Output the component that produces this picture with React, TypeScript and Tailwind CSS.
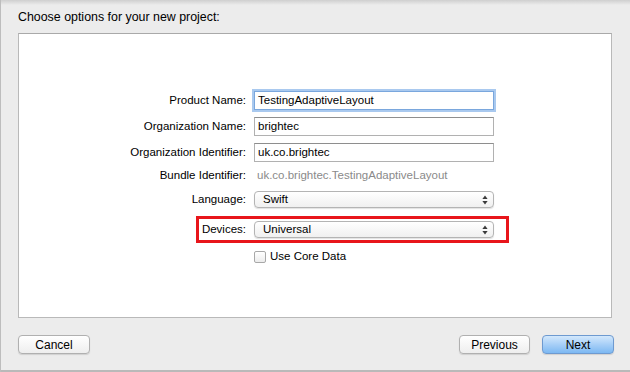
import React from "react";

const font = { fontFamily: '"Liberation Sans", Arial, sans-serif' };

function Arrows() {
  return (
    <svg width="6" height="10" viewBox="0 0 6 10" className="shrink-0">
      <path d="M3 0.5 L5.6 4 L0.4 4 Z" fill="#3a3a3a" />
      <path d="M3 9.5 L5.6 6 L0.4 6 Z" fill="#3a3a3a" />
    </svg>
  );
}

function TextField({ value, focus }: { value: string; focus?: boolean }) {
  return (
    <div
      className={
        "w-[240px] h-[19px] bg-white flex items-center pl-[3px] text-[11.5px] text-black border " +
        (focus
          ? "border-[#7aa7dd] shadow-[0_0_0_2px_#a9c9ef]"
          : "border-[#b1b1b1] border-t-[#8e8e8e]")
      }
    >
      {value}
    </div>
  );
}

function Popup({ value }: { value: string }) {
  return (
    <div className="w-[240px] h-[17px] rounded-[4px] border border-[#b4b4b4] bg-gradient-to-b from-white to-[#f0f0f0] shadow-[0_1px_1px_rgba(0,0,0,0.12)] flex items-center justify-between pl-[8px] pr-[5px] text-[11.5px] text-black">
      <span>{value}</span>
      <Arrows />
    </div>
  );
}

function Row({ label, children, className }: { label: string; children: React.ReactNode; className?: string }) {
  return (
    <div className={"flex items-center " + (className || "")}>
      <div className="w-[235px] text-right text-[11.5px] text-black pr-[8px] leading-none">{label}</div>
      {children}
    </div>
  );
}

function Button({ label, primary, w }: { label: string; primary?: boolean; w: string }) {
  return (
    <div
      className={
        w +
        " h-[19px] rounded-[4px] border flex items-center justify-center text-[12px] text-black shadow-[0_1px_1px_rgba(0,0,0,0.12)] " +
        (primary
          ? "border-[#6e9ad0] bg-gradient-to-b from-[#d3e8fc] via-[#a7cff7] to-[#7cb8f2]"
          : "border-[#b0b0b0] bg-gradient-to-b from-white to-[#eeeeee]")
      }
    >
      {label}
    </div>
  );
}

export default function App() {
  return (
    <div style={font} className="w-[630px] h-[372px] bg-[#ececec] relative overflow-hidden border-l border-[#bdbdbd] flex flex-col">
      <div className="absolute top-0 left-0 right-0 h-[5px] bg-gradient-to-b from-[#cfcfcf] to-[#ececec]" />
      <div className="relative pl-[17px] pt-[9px] h-[33px] text-[12.4px] text-black leading-[16px]">
        Choose options for your new project:
      </div>
      <div className="ml-[17px] w-[594px] h-[285px] bg-white border border-[#b9b9b9] border-t-[#a9a9a9] pt-[57px] flex flex-col">
        <Row label="Product Name:">
          <TextField value="TestingAdaptiveLayout" focus />
        </Row>
        <Row label="Organization Name:" className="mt-[7px]">
          <TextField value="brightec" />
        </Row>
        <Row label="Organization Identifier:" className="mt-[7px]">
          <TextField value="uk.co.brightec" />
        </Row>
        <Row label="Bundle Identifier:" className="mt-[5px] h-[18px]">
          <div className="pl-[3px] text-[11.5px] text-[#8a8a8a]">uk.co.brightec.TestingAdaptiveLayout</div>
        </Row>
        <Row label="Language:" className="mt-[6px]">
          <Popup value="Swift" />
        </Row>
        <Row label="Devices:" className="mt-[13px] relative">
          <Popup value="Universal" />
          <div className="absolute left-[177px] top-[-5px] w-[313px] h-[27px] border-[3px] border-[#e8151b]" />
        </Row>
        <div className="flex items-center mt-[13px] ml-[235px] gap-[4px]">
          <div className="w-[12px] h-[12px] rounded-[2px] border border-[#a8a8a8] bg-gradient-to-b from-white to-[#ececec]" />
          <span className="text-[11.5px] text-black leading-none">Use Core Data</span>
        </div>
      </div>
      <div className="flex items-center justify-between pl-[17px] pr-[16px] mt-[17px]">
        <Button label="Cancel" w="w-[72px]" />
        <div className="flex gap-[12px]">
          <Button label="Previous" w="w-[71px]" />
          <Button label="Next" primary w="w-[72px]" />
        </div>
      </div>
      <div className="absolute bottom-0 left-0 right-0 h-[2px] bg-[#b9b9b9]" />
    </div>
  );
}
